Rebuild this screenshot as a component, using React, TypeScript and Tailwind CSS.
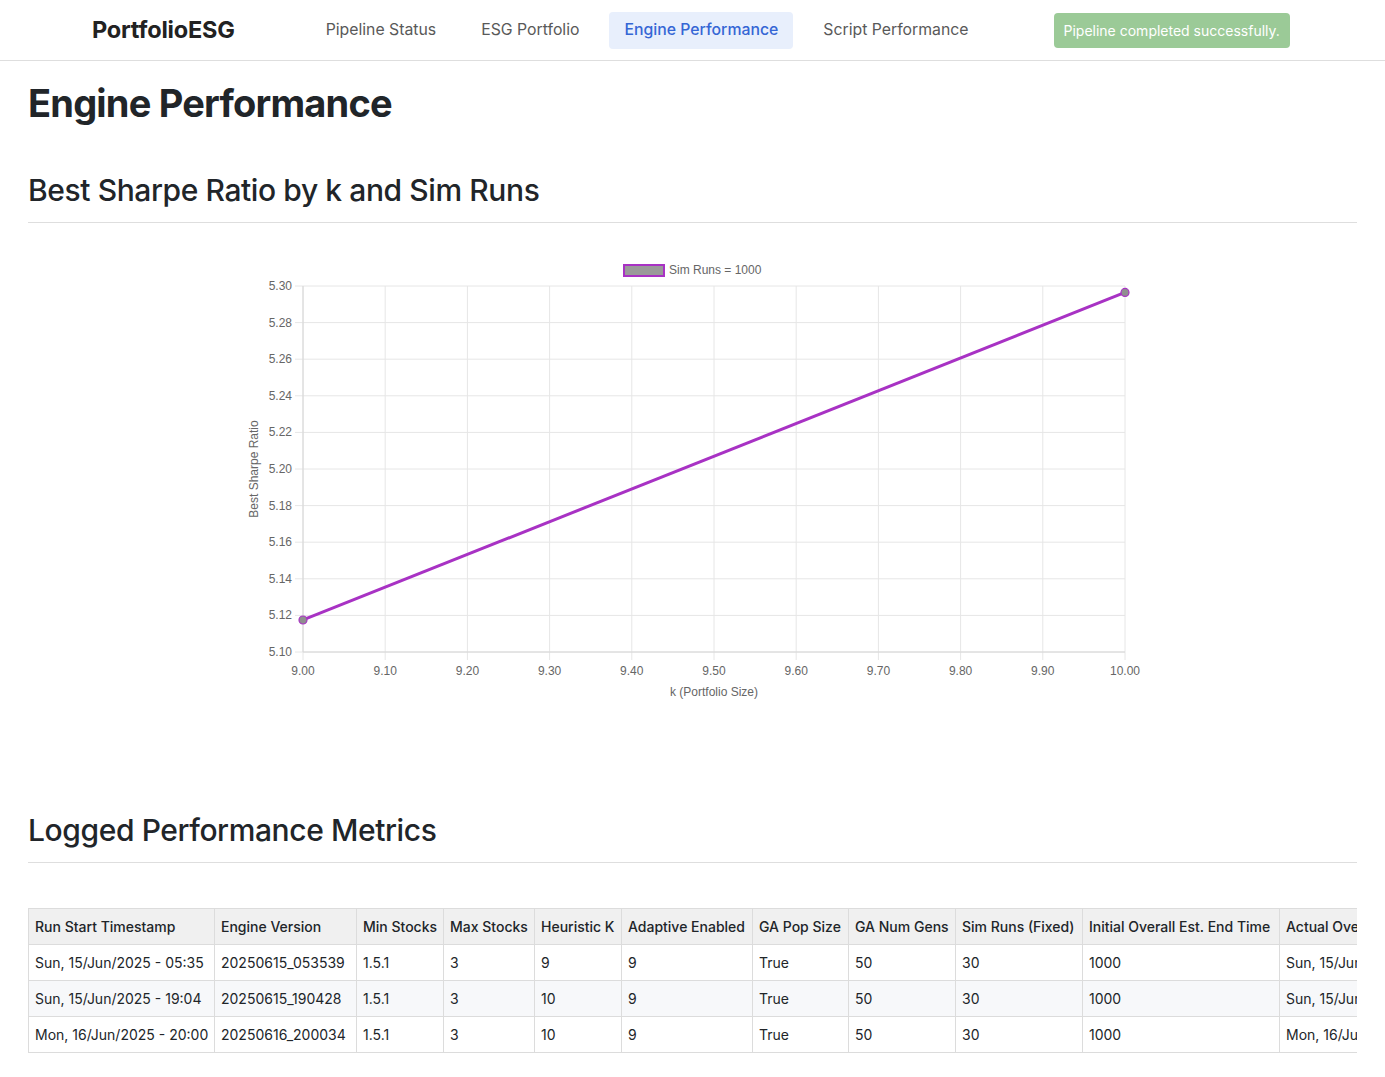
import React from 'react';

const navLinks = ['Pipeline Status', 'ESG Portfolio', 'Engine Performance', 'Script Performance'];

const columns = [
    { label: 'Run Start Timestamp', w: 'w-[186px]' },
    { label: 'Engine Version', w: 'w-[142px]' },
    { label: 'Min Stocks', w: 'w-[87px]' },
    { label: 'Max Stocks', w: 'w-[91px]' },
    { label: 'Heuristic K', w: 'w-[87px]' },
    { label: 'Adaptive Enabled', w: 'w-[131px]' },
    { label: 'GA Pop Size', w: 'w-[96px]' },
    { label: 'GA Num Gens', w: 'w-[107px]' },
    { label: 'Sim Runs (Fixed)', w: 'w-[127px]' },
    { label: 'Initial Overall Est. End Time', w: 'w-[197px]' },
    { label: 'Actual Overall End Time', w: 'w-[200px]' },
    { label: 'Total Duration', w: 'w-[130px]' },
];

const rows = [
    ['Sun, 15/Jun/2025 - 05:35', '20250615_053539', '1.5.1', '3', '9', '9', 'True', '50', '30', '1000', 'Sun, 15/Jun/2025 - 05:41', '00:06:12'],
    ['Sun, 15/Jun/2025 - 19:04', '20250615_190428', '1.5.1', '3', '10', '9', 'True', '50', '30', '1000', 'Sun, 15/Jun/2025 - 19:11', '00:07:03'],
    ['Mon, 16/Jun/2025 - 20:00', '20250616_200034', '1.5.1', '3', '10', '9', 'True', '50', '30', '1000', 'Mon, 16/Jun/2025 - 20:07', '00:07:21'],
];

// chart geometry (svg coords)
const PL = 275;
const PR = 1097;
const PT = 46;
const PB = 412;
const yTicks = Array.from({ length: 11 }, (_, i) => 5.1 + i * 0.02);
const xTicks = Array.from({ length: 11 }, (_, i) => 9 + i * 0.1);
const sx = (v: number) => PL + ((v - 9) / 1) * (PR - PL);
const sy = (v: number) => PB - ((v - 5.1) / 0.2) * (PB - PT);
const points = [
    { k: 9, s: 5.1175 },
    { k: 10, s: 5.2965 },
];

function SharpeChart() {
    const font = '"Liberation Sans", Arial, sans-serif';
    return (
        <svg width="1329" height="480" viewBox="0 0 1329 480" className="block">
            {/* legend */}
            <rect x="596" y="25" width="40" height="11" fill="#9a9a9a" stroke="#a832c4" strokeWidth="2" />
            <text x="641" y="34" fontSize="12" fill="#666" fontFamily={font}>Sim Runs = 1000</text>

            {/* grid */}
            {yTicks.map((t, i) => (
                <g key={'y' + i}>
                    <line x1={PL - 8} x2={PR} y1={sy(t)} y2={sy(t)} stroke="#e6e6e6" strokeWidth="1" />
                    <text x={PL - 11} y={sy(t) + 4} fontSize="12" fill="#666" textAnchor="end" fontFamily={font}>
                        {t.toFixed(2)}
                    </text>
                </g>
            ))}
            {xTicks.map((t, i) => (
                <g key={'x' + i}>
                    <line x1={sx(t)} x2={sx(t)} y1={PT} y2={PB + 8} stroke="#e6e6e6" strokeWidth="1" />
                    <text x={sx(t)} y={PB + 23} fontSize="12" fill="#666" textAnchor="middle" fontFamily={font}>
                        {t.toFixed(2)}
                    </text>
                </g>
            ))}
            <line x1={PL} x2={PL} y1={PT} y2={PB} stroke="#d6d6d6" />
            <line x1={PL} x2={PR} y1={PB} y2={PB} stroke="#d6d6d6" />

            {/* axis titles */}
            <text
                x="0"
                y="0"
                fontSize="12"
                fill="#666"
                textAnchor="middle"
                fontFamily={font}
                transform="translate(230 229) rotate(-90)"
            >
                Best Sharpe Ratio
            </text>
            <text x="686" y="456" fontSize="12" fill="#666" textAnchor="middle" fontFamily={font}>
                k (Portfolio Size)
            </text>

            {/* series */}
            <polyline
                points={points.map((p) => `${sx(p.k)},${sy(p.s)}`).join(' ')}
                fill="none"
                stroke="#a832c4"
                strokeWidth="3"
            />
            {points.map((p, i) => (
                <circle key={i} cx={sx(p.k)} cy={sy(p.s)} r="4" fill="#8f8f8f" stroke="#a832c4" strokeWidth="1.2" />
            ))}
        </svg>
    );
}

export default function App() {
    return (
        <div className="min-h-screen bg-white text-[#212529] font-['Inter','Noto_Sans',sans-serif]">
            <nav className="h-[61px] border-b border-[#dedede] flex items-center pl-[92px]">
                <span className="text-[23.5px] font-bold text-[#222] tracking-[-0.2px]">PortfolioESG</span>
                <div className="flex items-center gap-[15px] ml-[76px]">
                    {navLinks.map((l) => (
                        <a
                            key={l}
                            className={
                                l === 'Engine Performance'
                                    ? 'px-[15px] h-[37px] flex items-center rounded-[4px] bg-[#e8effc] text-[#3566d5] font-medium text-[15.8px]'
                                    : 'px-[15px] h-[37px] flex items-center text-[#595959] text-[15.8px]'
                            }
                        >
                            {l}
                        </a>
                    ))}
                </div>
                <div className="ml-[70px] h-[35px] px-[10px] flex items-center rounded-[4px] bg-[#9bca97] text-white text-[14px]">
                    Pipeline completed successfully.
                </div>
            </nav>

            <main className="px-[28px]">
                <h1 className="mt-[18px] text-[38px] leading-[48px] font-bold tracking-[-0.8px]">Engine Performance</h1>

                <h2 className="mt-[44px] text-[30px] leading-[38px] font-medium pb-[13px] border-b border-[#dedede] tracking-[-0.4px]">
                    Best Sharpe Ratio by k and Sim Runs
                </h2>

                <div className="mt-[17px]">
                    <SharpeChart />
                </div>

                <h2 className="mt-[91px] text-[30px] leading-[38px] font-medium pb-[13px] border-b border-[#dedede] tracking-[-0.4px]">
                    Logged Performance Metrics
                </h2>

                <div className="mt-[45px] overflow-hidden">
                    <table className="table-fixed border-collapse w-[1580px] text-[14px]">
                        <thead>
                            <tr className="bg-[#f0f0f0]">
                                {columns.map((c) => (
                                    <th
                                        key={c.label}
                                        className={`${c.w} h-[36px] px-[6px] text-left font-medium whitespace-nowrap border border-[#dcdcdc]`}
                                    >
                                        {c.label}
                                    </th>
                                ))}
                            </tr>
                        </thead>
                        <tbody>
                            {rows.map((r, i) => (
                                <tr key={i} className={i === 1 ? 'bg-[#f7f8fa]' : 'bg-white'}>
                                    {r.map((cell, j) => (
                                        <td key={j} className="h-[36px] px-[6px] whitespace-nowrap border border-[#dcdcdc]">
                                            {cell}
                                        </td>
                                    ))}
                                </tr>
                            ))}
                        </tbody>
                    </table>
                </div>
            </main>
        </div>
    );
}
